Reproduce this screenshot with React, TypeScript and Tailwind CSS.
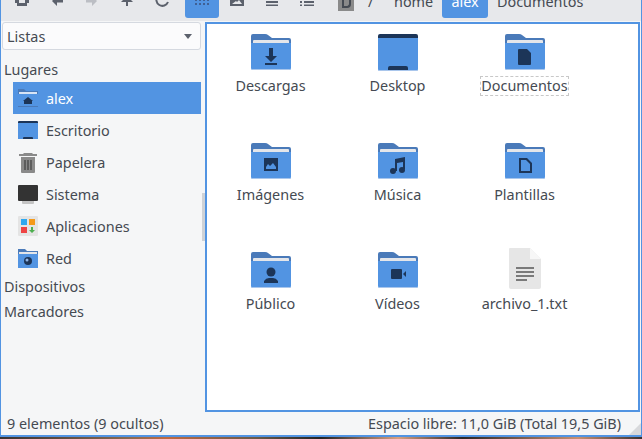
import React from "react";

const BLUE = "#5294e2";
const NAVY = "#1c3558";

const Folder = ({ children }: { children?: React.ReactNode }) => (
  <svg width="40" height="38" viewBox="0 0 40 38" className="block">
    <path d="M2 1h12q2 0 3 1l4 3h17q2 0 2 2v14H0V3q0-2 2-2z" fill="#4a7ab9" />
    <path d="M3 7h34q1 0 1 1v3H2V8q0-1 1-1z" fill="#e4e6ea" />
    <path d="M0 10h40v25q0 2-2 2H2q-2 0-2-2z" fill={BLUE} />
    <path d="M0 36h40v0q0 1-2 1H2q-2 0-2-1z" fill="#a9c6ec" />
    <g fill={NAVY}>{children}</g>
  </svg>
);

const DesktopIcon = ({ size = 40 }: { size?: number }) => (
  <svg width={size} height={size * 0.93} viewBox="0 0 40 37" className="block">
    <path d="M2 0h36q2 0 2 2v4H0V2q0-2 2-2z" fill={NAVY} />
    <path d="M0 4h40v31q0 2-2 2H2q-2 0-2-2z" fill={BLUE} />
    <path d="M10 36v-2q0-2 2-2h16q2 0 2 2v2z" fill={NAVY} />
    <path d="M0 36h40q0 1-2 1H2q-2 0-2-1z" fill="#a9c6ec" />
  </svg>
);

const TextFile = () => (
  <svg width="32" height="41" viewBox="0 0 32 41" className="block">
    <path d="M1 0h20l11 11v28q0 2-2 2H2q-2 0-2-2V1q0-1 1-1z" fill="#e6e6e6" />
    <path d="M21 0l11 11H21z" fill="#f7f7f7" />
    <g fill="#7a7a7a">
      <rect x="7" y="19" width="18" height="2" />
      <rect x="7" y="23" width="18" height="2" />
      <rect x="7" y="27" width="18" height="2" />
      <rect x="7" y="31" width="11" height="2" />
    </g>
  </svg>
);

const files: { name: string; icon: React.ReactNode; focus?: boolean }[] = [
  {
    name: "Descargas",
    icon: (
      <Folder>
        <path d="M18 15h4v8h4l-6 6-6-6h4z" />
        <rect x="14" y="30" width="12" height="2" />
      </Folder>
    ),
  },
  { name: "Desktop", icon: <DesktopIcon /> },
  {
    name: "Documentos",
    focus: true,
    icon: (
      <Folder>
        <path d="M14 16h8l4 4v11q0 1-1 1H14q-1 0-1-1V17q0-1 1-1z" />
      </Folder>
    ),
  },
  {
    name: "Imágenes",
    icon: (
      <Folder>
        <path fillRule="evenodd" d="M13 16h14v13H13zM15 25v2h10v-2l-3-4-3 3-2-2z" />
      </Folder>
    ),
  },
  {
    name: "Música",
    icon: (
      <Folder>
        <path d="M17 17l10-2v12h-2V20l-6 1v8h-2z" />
        <circle cx="15" cy="29" r="3" />
        <circle cx="24" cy="28" r="3" />
      </Folder>
    ),
  },
  {
    name: "Plantillas",
    icon: (
      <Folder>
        <path fillRule="evenodd" d="M14 16h8l5 5v10H14zM16 18v11h9v-7l-4-4z" />
      </Folder>
    ),
  },
  {
    name: "Público",
    icon: (
      <Folder>
        <circle cx="20" cy="21" r="4.5" />
        <path d="M13 32v-2q2-3 5-3h4q3 0 5 3v2z" />
      </Folder>
    ),
  },
  {
    name: "Vídeos",
    icon: (
      <Folder>
        <rect x="13" y="18" width="11" height="10" rx="1" />
        <path d="M25 23l3-3v6z" />
      </Folder>
    ),
  },
  { name: "archivo_1.txt", icon: <TextFile /> },
];

const places: { name: string; active?: boolean; icon: React.ReactNode }[] = [
  {
    name: "alex",
    active: true,
    icon: (
      <svg width="20" height="20" viewBox="0 0 20 20" className="block">
        <path d="M0 1h6l2 2h12v3H0z" fill="#4a7ab9" />
        <rect x="1" y="4" width="18" height="2" fill="#d8e4f5" />
        <path d="M10 9l5 4h-1v3H6v-3H5z" fill={NAVY} />
        <rect y="18" width="20" height="1" fill="#4a7ab9" />
      </svg>
    ),
  },
  { name: "Escritorio", icon: <DesktopIcon size={20} /> },
  {
    name: "Papelera",
    icon: (
      <svg width="18" height="21" viewBox="0 0 18 21" className="block">
        <path d="M5 1h8l1 1h4v2H0V2h4z" fill="#8a8a8a" />
        <path d="M2 5h14v15q0 1-1 1H3q-1 0-1-1z" fill="#8a8a8a" />
        <path d="M5 8h2v10H5zM8 8h2v10H8zM11 8h2v10h-2z" fill="#5c5c5c" />
      </svg>
    ),
  },
  {
    name: "Sistema",
    icon: (
      <svg width="20" height="19" viewBox="0 0 20 19" className="block">
        <path d="M1 0h18q1 0 1 1v14q0 1-1 1H1q-1 0-1-1V1q0-1 1-1z" fill="#333333" />
        <path d="M4 16h12v2q0 1-1 1H5q-1 0-1-1z" fill="#c4c4c4" />
      </svg>
    ),
  },
  {
    name: "Aplicaciones",
    icon: (
      <svg width="20" height="20" viewBox="0 0 20 20" className="block">
        <rect width="20" height="20" rx="1" fill="#e4e4e4" />
        <rect x="3" y="3" width="6" height="6" fill="#2ea8f0" />
        <rect x="11" y="3" width="6" height="6" fill="#f59a1a" />
        <rect x="3" y="11" width="6" height="6" fill="#ee4444" />
        <path d="M13 11h2v3h2l-3 3-3-3h2z" fill="#4caf50" />
      </svg>
    ),
  },
  {
    name: "Red",
    icon: (
      <svg width="20" height="19" viewBox="0 0 20 19" className="block">
        <path d="M0 0h7l2 2h11v4H0z" fill="#4a7ab9" />
        <rect x="1" y="3" width="18" height="2" fill="#e4e6ea" />
        <rect y="5" width="20" height="14" fill={BLUE} />
        <circle cx="10" cy="12" r="4" fill={NAVY} />
        <circle cx="9" cy="11" r="1.5" fill="#8fb4e6" />
      </svg>
    ),
  },
];

const ToolIcon = ({ children, faded }: { children: React.ReactNode; faded?: boolean }) => (
  <div className={`flex w-[35px] justify-center ${faded ? "opacity-30" : ""}`}>
    <svg width="16" height="18" viewBox="0 0 16 18" className="block" fill="#5c616c">
      {children}
    </svg>
  </div>
);

const App = () => {
  return (
    <div
      className="flex h-[439px] w-[642px] flex-col overflow-hidden text-[14.4px] text-[#454a52]"
      style={{ fontFamily: '"Noto Sans", sans-serif' }}
    >
      <div className="flex h-[437px] flex-col border-x border-b-2 border-[#5294e2] bg-[#f5f6f7]">
        {/* toolbar, cut off by the top of the picture */}
        <div className="flex h-[21px] items-start overflow-hidden bg-[#e7e8eb] pl-[3px]">
          <div className="-mt-[10px] flex items-start">
            <ToolIcon>
              <path d="M1 0h14v13h-2v3H3v-3H1zM8 6l-4 4h1v3h6v-3h1z" fillRule="evenodd" />
            </ToolIcon>
            <ToolIcon>
              <path d="M8 6l-5 5 5 5v-3.500h6v-3H8z" />
            </ToolIcon>
            <ToolIcon faded>
              <path d="M8 6l5 5-5 5v-3.500H2v-3h6z" />
            </ToolIcon>
            <ToolIcon>
              <path d="M2 12l6-6 6 6H9v4H7v-4z" />
            </ToolIcon>
            <ToolIcon>
              <path d="M14 12a6 6 0 1 1-1-6" fill="none" stroke="#5c616c" strokeWidth="2" />
            </ToolIcon>
            <div className="ml-[6px] flex h-[28px] w-[34px] items-end justify-center rounded-b-[3px] bg-[#5294e2] pb-[13px]">
              <div className="grid grid-cols-4 gap-[2px]">
                {[0, 1, 2, 3, 4, 5, 6, 7].map((i) => (
                  <span key={i} className="h-[2px] w-[2px] bg-[#3f6094]" />
                ))}
              </div>
            </div>
            <ToolIcon>
              <path d="M1 2h14v14H1zM3 14h10l-3-4-2 2-1-1z" fillRule="evenodd" />
            </ToolIcon>
            <ToolIcon>
              <path d="M2 7h12v2H2zM2 11h12v2H2zM2 14.500h12v1.500H2z" />
            </ToolIcon>
            <ToolIcon>
              <path d="M1 7h2v2H1zM5 7h10v2H5zM1 11h2v2H1zM5 11h10v2H5zM1 14.500h2v1.500H1zM5 14.500h10v1.500H5z" />
            </ToolIcon>
          </div>
          <div className="relative flex h-[18px] items-end">
            <div className="mb-[7px] ml-[14px] flex h-[11px] w-[16px] justify-center bg-[#8a8a8a]">
              <span className="h-[8px] w-[9px] rounded-br-[4px] border-x-2 border-b-2 border-[#454a52]" />
            </div>
            <span className="mb-[9px] ml-[14px] w-[6px] leading-none">/</span>
            <span className="mb-[9px] ml-[20px] w-[39px] leading-none">home</span>
            <span className="ml-[9px] flex h-[18px] w-[46px] items-end justify-center rounded-b-[3px] bg-[#5294e2] pb-[9px] leading-none text-white">
              alex
            </span>
            <span className="mb-[9px] ml-[9px] leading-none">Documentos</span>
          </div>
        </div>

        <div className="flex min-h-0 flex-1">
          {/* sidebar */}
          <aside className="relative w-[204px] shrink-0 pl-[1px]">
            <div className="mt-px flex h-[28px] w-[199px] items-center justify-between rounded-[3px] border border-[#d5d9e0] bg-[#fbfbfc] pl-[4px] pr-[8px]">
              <span className="pt-[2px]">Listas</span>
              <span className="h-0 w-0 border-x-[4px] border-t-[5px] border-x-transparent border-t-[#5c616c]" />
            </div>
            <div className="mt-[9px] h-[22px] pl-[2px] leading-[22px]">Lugares</div>
            <ul className="ml-[11px] mt-px w-[188px]">
              {places.map((p) => (
                <li
                  key={p.name}
                  className={`flex h-[32px] items-center ${p.active ? "bg-[#5294e2] text-white" : ""}`}
                >
                  <span className="flex w-[33px] justify-center pl-[1px] pr-[4px]">{p.icon}</span>
                  <span className="pt-[2px]">{p.name}</span>
                </li>
              ))}
            </ul>
            <div className="h-[25px] pl-[2px] leading-[25px]">Dispositivos</div>
            <div className="h-[25px] pl-[2px] leading-[25px]">Marcadores</div>
            <div className="absolute left-[201px] top-[172px] h-[48px] w-[3px] bg-[#cfd2d6]" />
          </aside>

          {/* files */}
          <div className="flex min-w-0 flex-1 flex-col pb-[1px] pt-px">
            <main className="h-[390px] w-[435px] border-2 border-[#5294e2] bg-white pt-[9px]">
              <div className="grid grid-cols-[127px_127px_127px]">
                {files.map((f) => (
                  <div key={f.name} className="flex h-[109px] flex-col items-center">
                    <div className="flex h-[38px] items-end">{f.icon}</div>
                    <span
                      className={`mt-[5px] px-[1px] leading-[20px] ${f.focus ? "outline outline-1 -outline-offset-1 outline-dashed outline-[#c8c8c8]" : ""}`}
                    >
                      {f.name}
                    </span>
                  </div>
                ))}
              </div>
            </main>
          </div>
        </div>

        {/* status bar */}
        <div className="relative flex h-[22px] shrink-0 items-center justify-between pl-[6px] pr-[20px]">
          <span>9 elementos (9 ocultos)</span>
          <span>Espacio libre: 11,0 GiB (Total 19,5 GiB)</span>
          <div className="absolute bottom-0 right-0 h-0 w-0 border-b-[12px] border-l-[12px] border-b-[#d8d9dc] border-l-transparent" />
        </div>
      </div>

      {/* wallpaper behind the window */}
      <div className="h-[2px] bg-[linear-gradient(90deg,#3a3230_0%,#8a6a50_20%,#c06a40_26%,#6a5a48_40%,#222_50%,#d8a080_62%,#2a2624_72%,#c89070_90%,#3a3230_100%)]" />
    </div>
  );
};

export default App;
